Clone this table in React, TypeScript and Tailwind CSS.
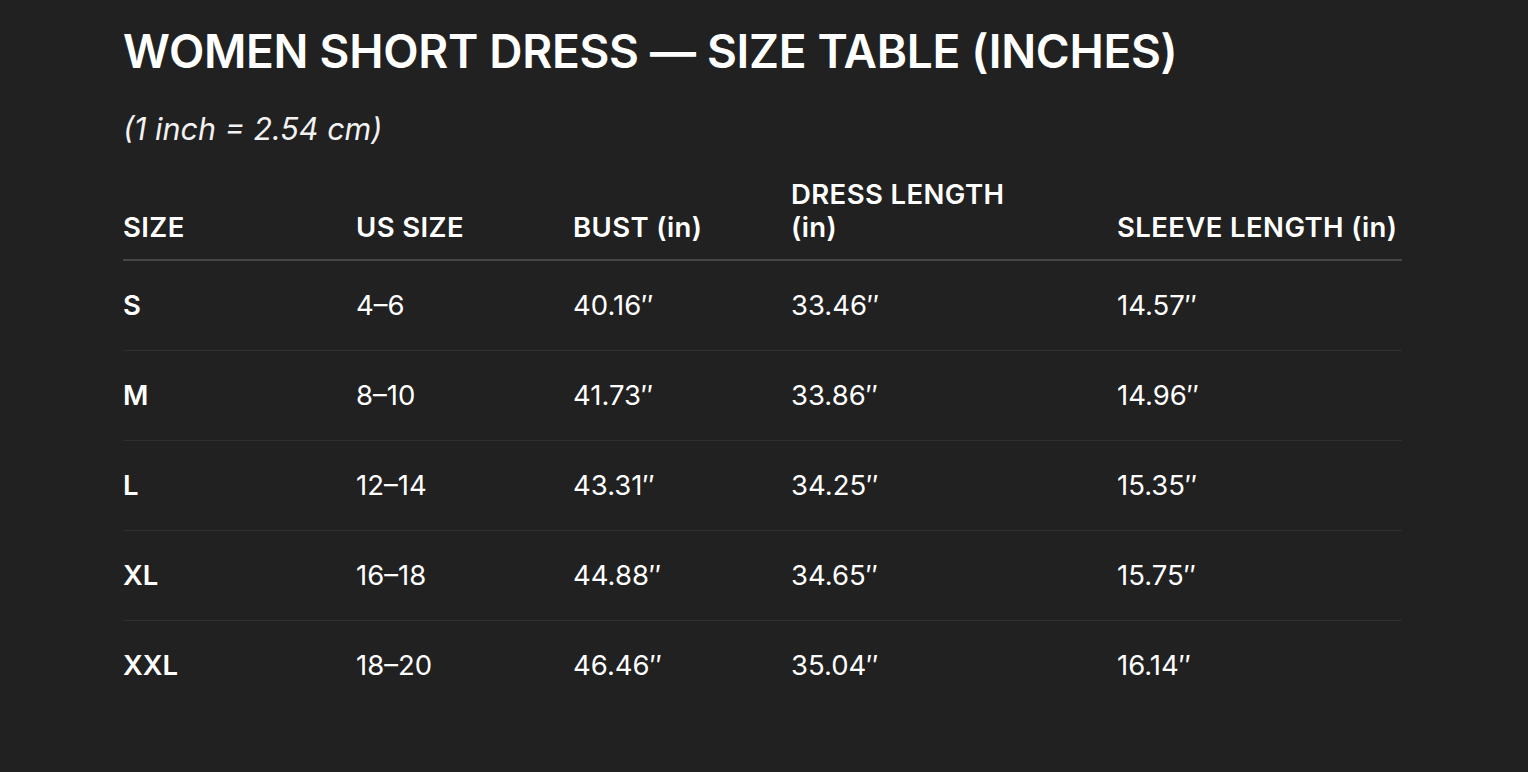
const rows = [
  ["S", "4–6", "40.16″", "33.46″", "14.57″"],
  ["M", "8–10", "41.73″", "33.86″", "14.96″"],
  ["L", "12–14", "43.31″", "34.25″", "15.35″"],
  ["XL", "16–18", "44.88″", "34.65″", "15.75″"],
  ["XXL", "18–20", "46.46″", "35.04″", "16.14″"],
];

export default function App() {
  return (
    <div className="min-h-[772px] bg-[#212121] text-white font-['Inter','Noto_Sans',sans-serif] pl-[123px] pr-[126px] pt-[22px]">
      <h1 className="text-[46px] font-semibold leading-[58px] tracking-[-0.3px]">
        WOMEN SHORT DRESS — SIZE TABLE (INCHES)
      </h1>
      <p className="mt-[29px] text-[30.5px] italic font-normal leading-[40px] text-[#f2f2f2]">(1 inch = 2.54 cm)</p>

      <table className="mt-[29px] w-full table-fixed border-collapse text-left">
        <colgroup>
          <col className="w-[233px]" />
          <col className="w-[217px]" />
          <col className="w-[218px]" />
          <col className="w-[326px]" />
          <col />
        </colgroup>
        <thead>
          <tr className="border-b-2 border-[#474747]">
            {["SIZE", "US SIZE", "BUST (in)", "DRESS LENGTH (in)", "SLEEVE LENGTH (in)"].map((h, i) => (
              <th
                key={h}
                className={
                  "align-bottom pb-[15px] text-[27.5px] font-semibold leading-[33px] tracking-[0.4px] " +
                  (i === 3 ? "pr-[100px]" : "")
                }
              >
                {h}
              </th>
            ))}
          </tr>
        </thead>
        <tbody>
          {rows.map((r) => (
            <tr key={r[0]} className="h-[90px] border-b border-[#2f2f2f] last:border-b-0">
              {r.map((c, i) => (
                <td
                  key={i}
                  className={"text-[27.5px] leading-[33px] " + (i === 0 ? "font-semibold" : "font-normal")}
                >
                  {c}
                </td>
              ))}
            </tr>
          ))}
        </tbody>
      </table>
    </div>
  );
}
